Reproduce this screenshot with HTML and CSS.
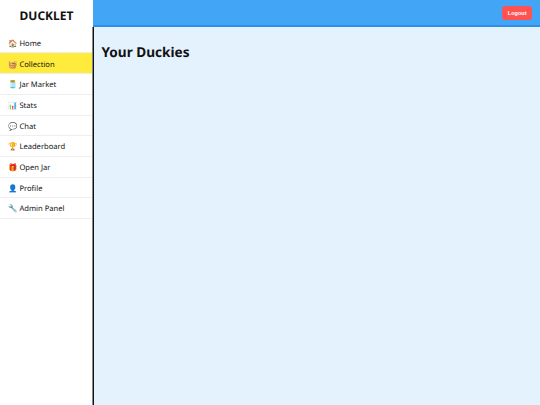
FILE: index.html
```html
<!DOCTYPE html>
<html lang="en">
<head>
<meta charset="UTF-8" />
<title>Ducklet</title>
<link rel="stylesheet" href="styles.css">
</head>
<body>

<div class="sidebar">
  <div class="logo">DUCKLET</div>
  <a class="nav-item" href="#">🏠 Home</a>
  <a class="nav-item active" href="#">🧺 Collection</a>
  <a class="nav-item" href="#">🫙 Jar Market</a>
  <a class="nav-item" href="#">📊 Stats</a>
  <a class="nav-item" href="#">💬 Chat</a>
  <a class="nav-item" href="#">🏆 Leaderboard</a>
  <a class="nav-item" href="#">🎁 Open Jar</a>
  <a class="nav-item" href="#">👤 Profile</a>
  <a class="nav-item" href="#">🔧 Admin Panel</a>
</div>

<div class="main">
  <div class="topbar">
    <button class="logout">Logout</button>
  </div>
  <div class="content">
    <h1>Your Duckies</h1>
  </div>
</div>

</body>
</html>
```

FILE: styles.css
```css
body {
  font-family: 'Noto Sans', Arial, sans-serif;
  margin: 0;
  display: flex;
  height: 100vh;
  overflow: hidden;
  color: #111;
  text-rendering: geometricPrecision;
}
.sidebar {
  width: 93px;
  flex-shrink: 0;
  background: white;
}
.logo {
  height: 32.8px;
  font-size: 12px;
  font-weight: 700;
  line-height: 32.8px;
  text-align: center;
}
.nav-item {
  display: block;
  padding: 7.2px 8px 2.8px;
  font-size: 7.6px;
  line-height: 9.7px;
  color: #111;
  text-decoration: none;
  border-bottom: 1px solid #eee;
}
.nav-item.active {
  background: #ffeb3b;
}
.main {
  flex: 1;
  display: flex;
  flex-direction: column;
}
.topbar {
  height: 24px;
  flex-shrink: 0;
  display: flex;
  justify-content: flex-end;
  align-items: center;
  padding: 1px 8px 0;
  background: #42a5f5;
  border-bottom: 2px solid #2f8fe6;
}
.logout {
  padding: 4.5px 5.5px 3.5px;
  border: none;
  border-radius: 3px;
  background: #ff5252;
  color: white;
  font-family: 'Liberation Sans', Arial, sans-serif;
  font-size: 5.5px;
  line-height: 5.5px;
  font-weight: 700;
}
.content {
  flex: 1;
  background: #e3f2fd;
  padding: 15px 7.5px;
  border-left: 1px solid #111;
  box-shadow: -1px 0 0 #888;
}
h1 {
  margin: 0;
  font-size: 13.6px;
  font-weight: 700;
}
```
